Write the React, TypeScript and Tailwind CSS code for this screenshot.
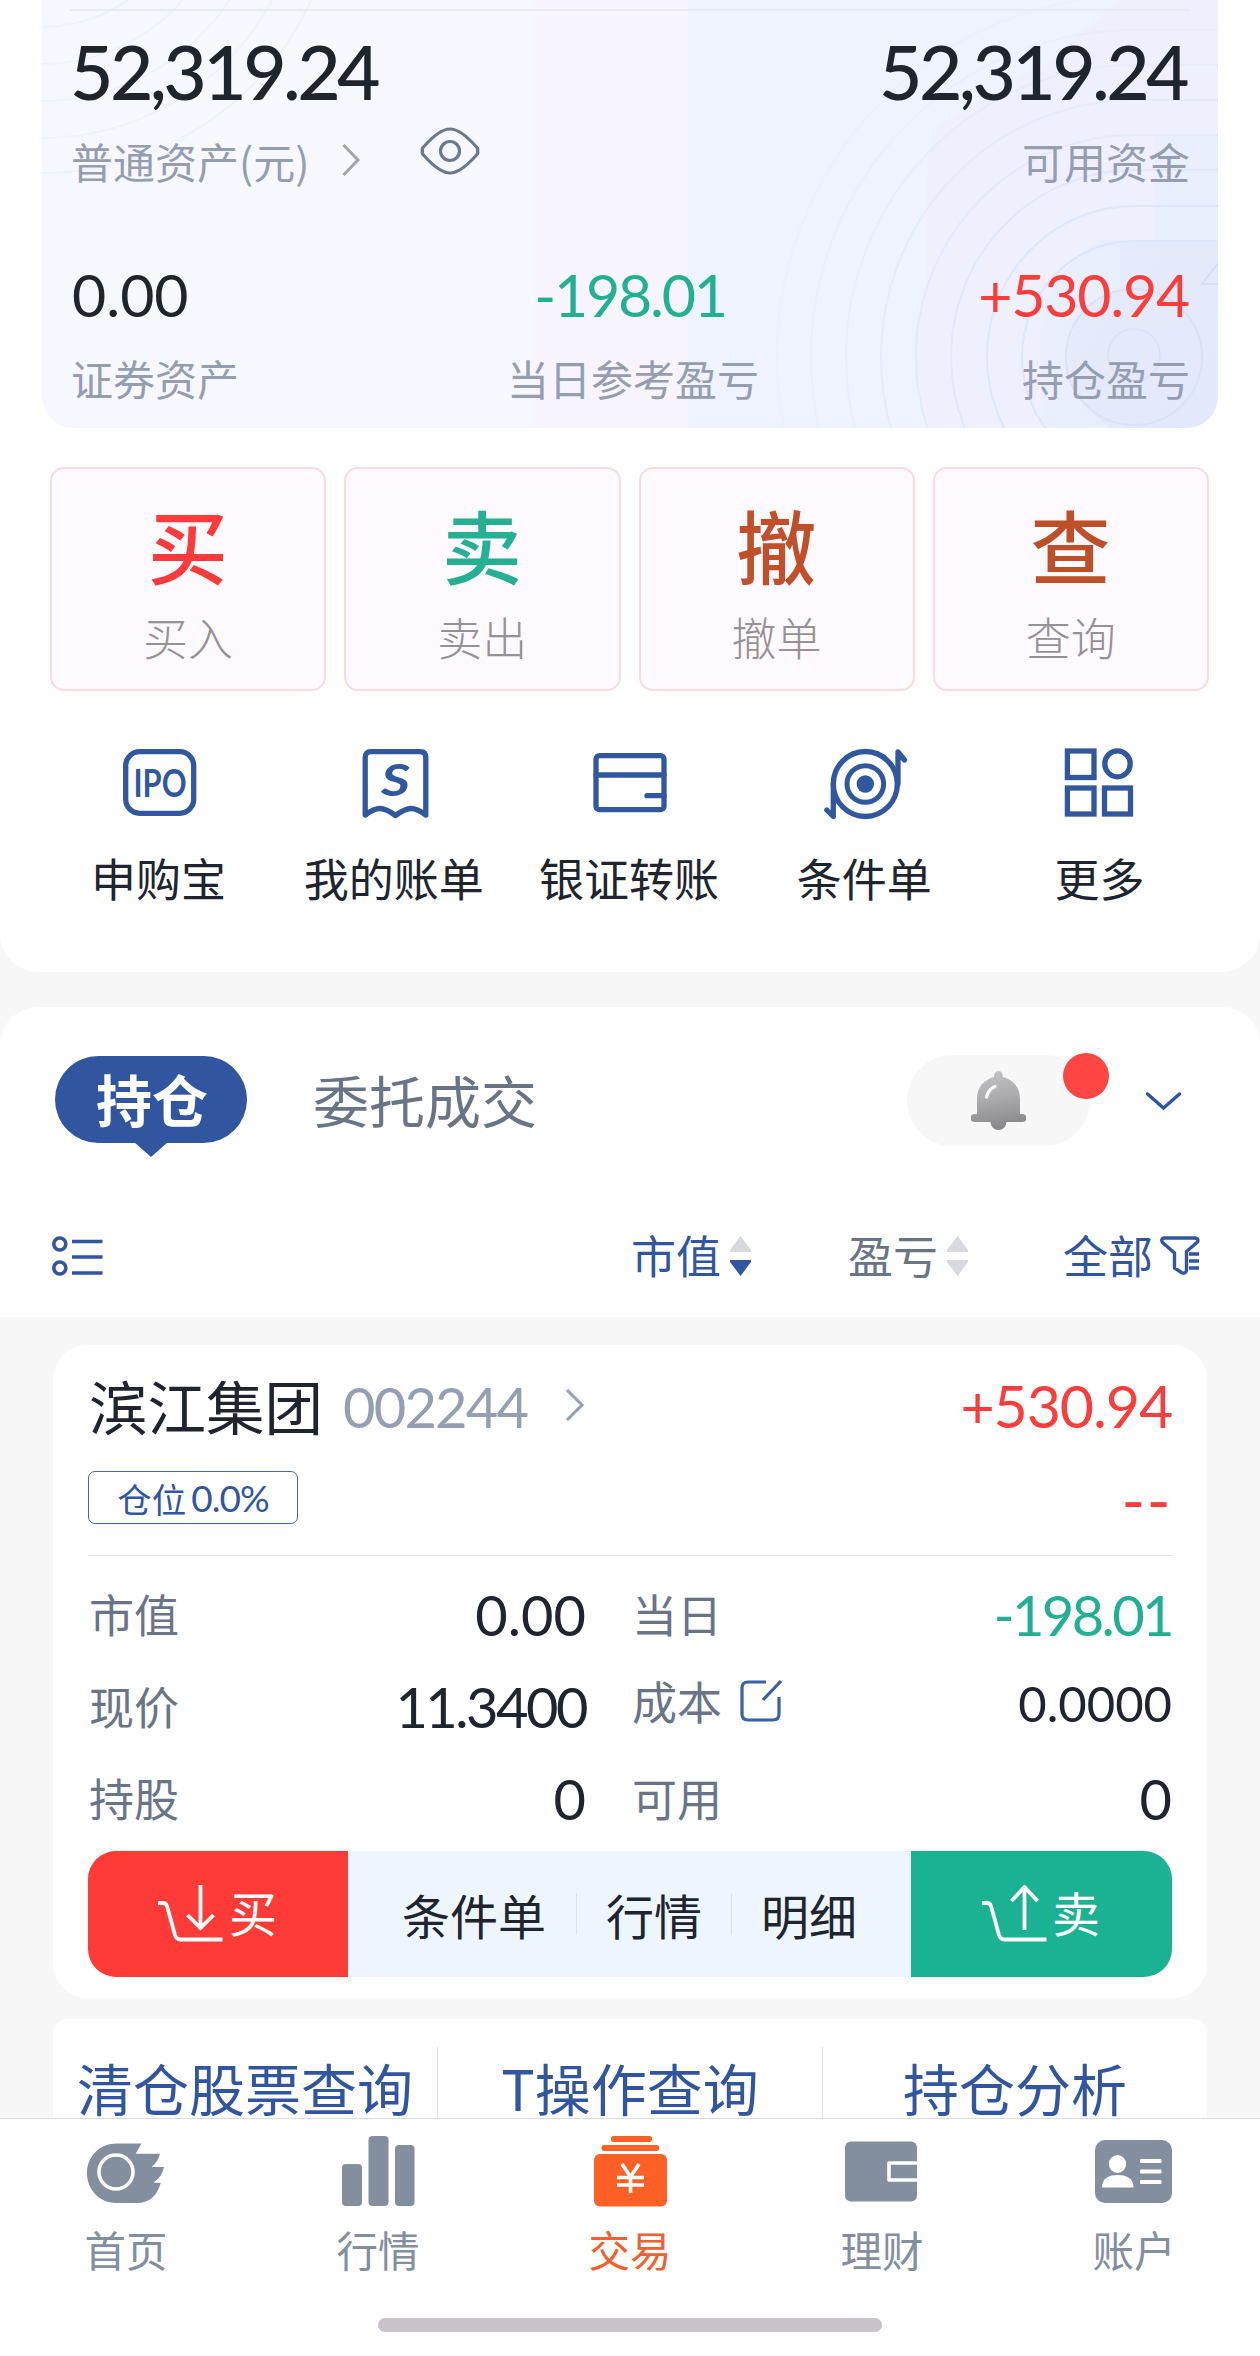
import type { ReactNode } from "react";

const CJK = "font-['Noto_Sans_CJK_SC','Noto_Sans',sans-serif]";
const NUM = "font-['Lato','Noto_Sans_CJK_SC',sans-serif]";

function CardPattern() {
  const rings = [112, 147, 183, 218, 253, 288, 323, 357];
  return (
    <svg className="absolute inset-0" width="1176" height="428" viewBox="42 0 1176 428" fill="none">
      <defs>
        <linearGradient id="corner" x1="0" y1="0" x2="1" y2="1">
          <stop offset="0" stopColor="#e7ebfa" />
          <stop offset="1" stopColor="#e2e9fb" />
        </linearGradient>
      </defs>
      <path d="M1218 0H1120L1050 60 940 125Q926 150 926 200V290Q900 350 930 428H1218Z" fill="#f0effe" />
      <path d="M1218 134H1155V240H1100Q1050 270 1040 330L1042 428H1218Z" fill="#e6effe" opacity="0.6" />
      <path d="M1218 241H1120V290Q1075 300 1068 350Q1070 400 1110 428H1218Z" fill="url(#corner)" />
      {[150, 187, 224, 261, 296].map((r) => (
        <circle key={r} cx="42" cy="-123" r={r} stroke="#edf2fe" strokeWidth="2" />
      ))}
      {rings.map((r, i) => (
        <path
          key={r}
          d={`M1220 ${353 - r}H1134A${r} ${r + 4} 0 0 0 ${1134 - r} 357A${r} ${r + 4} 0 0 0 1134 ${361 + r}`}
          stroke="#dae4f9"
          strokeWidth="2"
          opacity={0.85 - i * 0.1}
        />
      ))}
      <circle cx="1134" cy="357" r="68" stroke="#dbe1f6" strokeWidth="2" />
      <circle cx="1134" cy="355" r="26" stroke="#dde3f6" strokeWidth="2" />
      <path d="M1219 262 1202 284H1219" stroke="#d8dff4" strokeWidth="2" />
    </svg>
  );
}

function AssetCard() {
  return (
    <div className="relative mx-[42px] h-[428px] overflow-hidden rounded-b-[32px] bg-[linear-gradient(90deg,#f7f8ff_0_493px,#f8f4fe_493px_646px,#eef3ff_646px)]">
      <CardPattern />
      <div className="relative flex flex-col px-[28px] pt-[9px]">
        <div className="h-[2px] bg-[#e9ebf2]" />
        <div className={`${NUM} mt-[21px] flex h-[76px] justify-between text-[75px] leading-[78px] font-medium tracking-[-3.6px] text-[#20242f]`}>
          <span>52,319.24</span>
          <span className="mr-[4px]">52,319.24</span>
        </div>
        <div className="mt-[23px] flex h-[60px] items-center text-[42px] leading-[60px] text-[#959eb0]">
          <span className="w-[272px] pl-px whitespace-nowrap">普通资产(元)</span>
          <svg className="-mt-[2px]" width="18" height="32" viewBox="0 0 18 32" fill="none" stroke="#a5a2a8" strokeWidth="3">
            <path d="M1.5 1 16 16 1.5 31" />
          </svg>
          <svg className="mb-[20px] ml-[60px]" width="60" height="48" viewBox="0 0 60 48" fill="none" stroke="#6b788e" strokeWidth="3.200">
            <path d="M2.500 24Q1.500 22 3.500 20C15 7 23 2 30 2S45 7 56.500 20Q58.500 22 57.500 24Q58.500 26 56.500 28C45 41 37 46 30 46S15 41 3.500 28Q1.500 26 2.500 24Z" />
            <circle cx="30" cy="24" r="9.500" />
          </svg>
          <span className="ml-auto">可用资金</span>
        </div>
        <div className={`${NUM} mt-[73px] grid h-[60px] grid-cols-3 text-[59px] leading-[62px]`}>
          <span className="pl-[2px] text-[#20242f]">0.00</span>
          <span className="text-center tracking-[-2.200px] text-[#22b092]">-198.01</span>
          <span className="mr-[1px] text-right tracking-[-1.200px] text-[#fb3d3b]">+530.94</span>
        </div>
        <div className="mt-[29px] grid h-[50px] grid-cols-3 text-[42px] leading-[50px] text-[#959eb0]">
          <span className="pl-px">证券资产</span>
          <span className="pl-[6px] text-center">当日参考盈亏</span>
          <span className="text-right">持仓盈亏</span>
        </div>
      </div>
    </div>
  );
}

function ActionTile({ glyph, label, color }: { glyph: string; label: string; color: string }) {
  return (
    <div className="flex h-[224px] flex-1 flex-col items-center rounded-[14px] border-2 border-[#fadcdd] bg-[#fefaff] pt-[24px]">
      <div className={`h-[100px] pr-px text-[80px] leading-[100px] font-medium ${color}`}>{glyph}</div>
      <div className="mt-[19px] h-[50px] text-[45px] leading-[50px] font-light text-[#989193]">{label}</div>
    </div>
  );
}

function Shortcut({ label, children }: { label: string; children: ReactNode }) {
  return (
    <div className="flex flex-col items-center">
      <svg className="overflow-visible" width="80" height="80" viewBox="0 0 80 80" fill="none" stroke="#31589f" strokeWidth="5.3" strokeLinejoin="round" strokeLinecap="round">
        {children}
      </svg>
      <div className="mt-[30px] h-[50px] pr-[2px] text-[45px] leading-[50px] whitespace-nowrap text-[#20242f]">{label}</div>
    </div>
  );
}

function Shortcuts() {
  return (
    <div className="mx-[42px] mt-[52px] grid grid-cols-5">
      <Shortcut label="申购宝">
        <rect x="5.700" y="8.700" width="68" height="61.600" rx="14" />
        <text x="40" y="54" textAnchor="middle" textLength="53" lengthAdjust="spacingAndGlyphs" stroke="none" fill="#31589f" fontFamily="Lato" fontWeight="700" fontSize="38">
          IPO
        </text>
      </Shortcut>
      <Shortcut label="我的账单">
        <path d="M10.200 72V14.500Q10.200 8.700 16 8.700H65Q70.800 8.700 70.800 14.500V72Q62 65.500 56 65.500T40.500 72.500Q31 65.500 25 65.500T10.200 72Z" />
        <text x="40.500" y="53" textAnchor="middle" textLength="29" lengthAdjust="spacingAndGlyphs" stroke="none" fill="#31589f" fontFamily="Lato" fontStyle="italic" fontWeight="700" fontSize="44">
          S
        </text>
      </Shortcut>
      <Shortcut label="银证转账">
        <rect x="6" y="12.700" width="68" height="54" rx="3.500" />
        <path d="M6 32H74M57 52.700H74" />
      </Shortcut>
      <Shortcut label="条件单">
        <ellipse cx="40.300" cy="41" rx="32" ry="32.500" />
        <circle cx="40.300" cy="41" r="18.300" strokeWidth="5" />
        <circle cx="40.300" cy="41" r="8.700" fill="#31589f" stroke="none" />
        <path d="M73 41V9L79.500 17M8.300 41V73.500L1.800 67" />
      </Shortcut>
      <Shortcut label="更多">
        <g strokeLinejoin="miter">
          <rect x="7.400" y="8" width="26.600" height="26.500" />
          <ellipse cx="57.500" cy="20.800" rx="12.700" ry="13" />
          <rect x="7.400" y="45" width="26.600" height="26" />
          <rect x="44.500" y="45" width="26" height="26" />
        </g>
      </Shortcut>
    </div>
  );
}

function SortArrows({ down }: { down: string }) {
  return (
    <svg className="mt-px ml-[9px]" width="21" height="40" viewBox="0 0 21 40">
      <path d="M10.500 0 21 14V16H0V14Z" fill="#d7d9de" />
      <path d="M10.500 40 21 26V24H0V26Z" fill={down} />
    </svg>
  );
}

function HoldingsHeader() {
  return (
    <div className="mt-[35px] h-[310px] rounded-t-[38px] bg-white pt-[48px]">
      <div className="flex h-[102px] items-start pr-[77px] pl-[55px]">
        <div className="relative mt-[1px] h-[87px] w-[192px] rounded-full bg-[#31569f] pl-[2px] text-center text-[56px] leading-[84px] font-bold text-white">
          持仓
          <svg className="absolute top-[86px] left-[79px]" width="34" height="15" viewBox="0 0 34 15">
            <path d="M0 0H34L17 15Z" fill="#31569f" />
          </svg>
        </div>
        <div className="ml-[66px] text-[56px] leading-[87px] text-[#6a7487]">委托成交</div>
        <div className="relative ml-auto flex h-[91px] w-[183px] rounded-full bg-[#f7f7f8]">
          <svg className="mt-[16px] ml-[64px]" width="55" height="59" viewBox="0 0 55 59">
            <defs>
              <linearGradient id="bell" x1="0" y1="0" x2="0.150" y2="1">
                <stop offset="0" stopColor="#c4c4c6" />
                <stop offset="0.500" stopColor="#acacae" />
                <stop offset="1" stopColor="#8a8a8d" />
              </linearGradient>
            </defs>
            <path
              d="M27.500 0C30.500 0 32 3 32 6C43 9 49 17 49 28V43H51.500A4 4 0 0 1 51.500 51H35.500A8 8 0 0 1 19.500 51H3.500A4 4 0 0 1 3.500 43H6V28C6 17 12 9 23 6C23 3 24.500 0 27.500 0Z"
              fill="url(#bell)"
            />
            <path d="M15.500 26Q17.500 18 24 15.500" stroke="#fff" strokeWidth="3.200" strokeLinecap="round" fill="none" />
          </svg>
          <div className="absolute -top-[2px] left-[156px] size-[46px] rounded-full bg-[#ff4642]" />
        </div>
        <svg className="mt-[36px] ml-[54px]" width="39" height="20" viewBox="0 0 39 20" fill="none" stroke="#31569f" strokeWidth="3.500" strokeLinecap="round">
          <path d="M3.500 3 19.500 17 35.500 3" />
        </svg>
      </div>
      <div className="mt-[73px] flex h-[50px] items-center pl-[53px] text-[45px] leading-[50px]">
        <svg className="mt-[2px] -ml-px" width="51" height="42" viewBox="0 0 51 42" fill="none" stroke="#31569f" strokeWidth="3.600">
          <circle cx="7.800" cy="9" r="6" />
          <circle cx="7.800" cy="33" r="6" />
          <path d="M20 6.500H50.500M20 22H50.500M20 38H50.500" />
        </svg>
        <span className="ml-[528px] text-[#31569f]">市值</span>
        <SortArrows down="#31569f" />
        <span className="ml-[97px] text-[#6a7487]">盈亏</span>
        <SortArrows down="#d7d9de" />
        <span className="ml-[95px] text-[#31569f]">全部</span>
        <svg className="mt-px ml-[7px]" width="40" height="40" viewBox="0 0 40 40" fill="none" stroke="#31569f" strokeWidth="3.400" strokeLinejoin="round">
          <path d="M4 2H35Q39 2.500 37.500 6L26.500 15.500V34.500Q25.500 38.500 21.500 36.500L14.500 32V17L2.500 6.500Q0.500 3 4 2Z" />
          <path d="M29 18H39M29 25H39M29 32H39" />
        </svg>
      </div>
    </div>
  );
}

function Field({ label, children }: { label: ReactNode; children: ReactNode }) {
  return (
    <div className="flex h-[92px] items-center justify-between">
      <div className="flex items-center pt-px pl-px text-[45px] leading-[50px] text-[#6a7487]">{label}</div>
      <div className={`${NUM} pt-[4px] text-[56px] leading-[60px] text-[#20242f]`}>{children}</div>
    </div>
  );
}

function Cart({ up }: { up?: boolean }) {
  return (
    <svg width="65" height="58" viewBox="0 0 65 58" fill="none" stroke="#fff" strokeWidth="3.800">
      <path d="M0 18H5Q8 18 9 21L17 50Q18.500 54.500 22 54.500H64.500" />
      {up ? <path d="M42.500 45V2M29.500 16 42.500 2 55.500 16" /> : <path d="M42.500 0V43M29.500 30 42.500 43 55.500 30" />}
    </svg>
  );
}

function StockCard() {
  return (
    <div className="mx-[53px] mt-[28px] h-[653px] rounded-[34px] bg-white px-[35px] pt-[25px]">
      <div className="flex h-[70px] items-center leading-[70px]">
        <span className="pl-[1px] text-[58.500px] text-[#20242f]">滨江集团</span>
        <span className={`${NUM} ml-[20px] pt-[3px] text-[56px] tracking-[-1.800px] text-[#959eb3]`}>002244</span>
        <svg className="ml-[38px]" width="20" height="34" viewBox="0 0 20 34" fill="none" stroke="#959eb3" strokeWidth="3">
          <path d="M2 2 17 17 2 32" />
        </svg>
        <span className={`${NUM} ml-auto pt-px text-[59px] tracking-[-1.100px] text-[#fb3d3b]`}>+530.94</span>
      </div>
      <div className="mt-[31px] flex h-[53px] items-center justify-between">
        <div className="flex h-[53px] w-[210px] items-center justify-center rounded-[7px] border-[1.500px] border-[#4b6a9c] text-[34.500px] leading-[46px] text-[#31569f]">
          <span>仓位</span>
          <span className={`${NUM} ml-[5px] text-[37px] tracking-[-1px]`}>0.0%</span>
        </div>
        <span className={`${NUM} pt-[3px] text-[64px] leading-[53px] tracking-[1.500px] text-[#fb3d3b]`}>--</span>
      </div>
      <div className="mt-[31px] h-px bg-[#e4e5e7]" />
      <div className="mt-[11px] grid grid-cols-[498px_541px] gap-x-[45px]">
        <Field label="市值">0.00</Field>
        <Field label="当日">
          <span className="tracking-[-2.600px] text-[#22b092]">-198.01</span>
        </Field>
        <Field label="现价">
          <span className="tracking-[-2.500px]">11.3400</span>
        </Field>
        <div className="-mt-[5px]">
          <Field
            label={
              <>
                成本
                <svg className="ml-[18px]" width="42" height="42" viewBox="0 0 42 42" fill="none" stroke="#3a61a6" strokeWidth="3.200">
                  <path d="M26 2H8Q2 2 2 8V34Q2 40 8 40H33Q39 40 39 34V17M41 1 23 20" />
                </svg>
              </>
            }
          >
            <span className="text-[49px]">0.0000</span>
          </Field>
        </div>
        <Field label="持股">0</Field>
        <Field label="可用">0</Field>
      </div>
      <div className="mt-[8px] flex h-[126px] overflow-hidden rounded-[28px] text-[48px] leading-[122px]">
        <div className="flex w-[260px] items-center bg-[#ff3b37] pl-[70px] text-white">
          <Cart />
          <span className="ml-[6px] pb-[6px]">买</span>
        </div>
        <div className="flex w-[563px] items-center bg-[#edf6ff] pb-px pl-[54px] text-[#20242f]">
          <span>条件单</span>
          <div className="ml-[30px] h-[42px] w-px bg-[#dce3ec]" />
          <span className="ml-[29px]">行情</span>
          <div className="ml-[29px] h-[42px] w-px bg-[#dce3ec]" />
          <span className="ml-[29px]">明细</span>
        </div>
        <div className="flex flex-1 items-center bg-[#1bb294] pl-[71px] text-white">
          <Cart up />
          <span className="ml-[5px] pb-[6px]">卖</span>
        </div>
      </div>
    </div>
  );
}

function QueryLinks() {
  return (
    <div className="mx-[53px] mt-[21px] flex h-[99px] rounded-t-[14px] bg-white text-center text-[56px] leading-[60px] text-[#31569f]">
      <div className="flex-1 pt-[38px]">清仓股票查询</div>
      <div className="mt-[28px] w-px bg-[#e2e3e6]" />
      <div className="flex-1 pt-[38px]">T操作查询</div>
      <div className="mt-[28px] w-px bg-[#e2e3e6]" />
      <div className="flex-1 pt-[38px]">持仓分析</div>
    </div>
  );
}

function NavItem({ label, active, children }: { label: string; active?: boolean; children: ReactNode }) {
  return (
    <div className="flex flex-col items-center">
      <svg width="90" height="80" viewBox="0 0 90 80" fill={active ? "#ff6026" : "#838e9e"}>
        {children}
      </svg>
      <div className={active ? "mt-[14px] text-[41.500px] leading-[50px] text-[#f06030]" : "mt-[14px] text-[41.500px] leading-[50px] text-[#838e9e]"}>{label}</div>
    </div>
  );
}

function BottomNav() {
  return (
    <div className="flex flex-1 flex-col items-center border-t border-[#dcdcde] bg-white">
      <div className="mt-[11px] grid w-full grid-cols-5">
        <NavItem label="首页">
          <path d="M60.500 13.500 54.500 23.700H79Q77 32 70.500 37H83Q81 47 72.500 52.500L79.700 53Q74 73 56 73H35C18 73 6 59 6 43S18 13.500 36 13.500Z" />
          <circle cx="35" cy="42" r="17" fill="none" stroke="#fff" strokeWidth="3.500" />
        </NavItem>
        <NavItem label="行情">
          <rect x="9" y="34" width="20" height="42" rx="4" />
          <rect x="35.500" y="6" width="20" height="70" rx="4" />
          <rect x="62" y="15" width="19.500" height="61" rx="4" />
        </NavItem>
        <NavItem label="交易" active>
          <rect x="26" y="6" width="41" height="6" rx="2.500" />
          <rect x="16.500" y="15" width="57.500" height="6" rx="2.500" />
          <rect x="9" y="24" width="73" height="52.500" rx="6" />
          <path d="M37 34 45.500 47 54 34M45.500 47V63M32 47.500H59M32 55H59" fill="none" stroke="#fff" strokeWidth="3.600" />
        </NavItem>
        <NavItem label="理财">
          <rect x="8" y="11.500" width="72" height="60" rx="6" />
          <path d="M81 33H52V50H81" fill="none" stroke="#fff" strokeWidth="3.600" strokeLinejoin="round" />
        </NavItem>
        <NavItem label="账户">
          <rect x="6" y="10" width="77" height="63" rx="10" />
          <g fill="#fff">
            <ellipse cx="28.500" cy="34" rx="8.700" ry="9" />
            <path d="M13 57.500C13 48 20 45 28.500 45S44.500 48 44.500 57.500Z" />
            <rect x="51" y="29" width="21.500" height="4" rx="1" />
            <rect x="51" y="39.500" width="21.500" height="4" rx="1" />
            <rect x="51" y="50" width="21.500" height="4" rx="1" />
          </g>
        </NavItem>
      </div>
      <div className="mt-[44px] h-[14px] w-[504px] rounded-full bg-[#c8c3c8]" />
    </div>
  );
}

export default function App() {
  return (
    <div className={`${CJK} flex h-[2356px] w-[1260px] flex-col overflow-hidden bg-[#f7f7f7]`}>
      <div className="h-[972px] rounded-b-[38px] bg-white">
        <AssetCard />
        <div className="mr-[51px] ml-[50px] mt-[39px] flex gap-[18px]">
          <ActionTile glyph="买" label="买入" color="text-[#fe3b3a]" />
          <ActionTile glyph="卖" label="卖出" color="text-[#25b093]" />
          <ActionTile glyph="撤" label="撤单" color="text-[#c14f2a]" />
          <ActionTile glyph="查" label="查询" color="text-[#bd5028]" />
        </div>
        <Shortcuts />
      </div>
      <HoldingsHeader />
      <StockCard />
      <QueryLinks />
      <BottomNav />
    </div>
  );
}
